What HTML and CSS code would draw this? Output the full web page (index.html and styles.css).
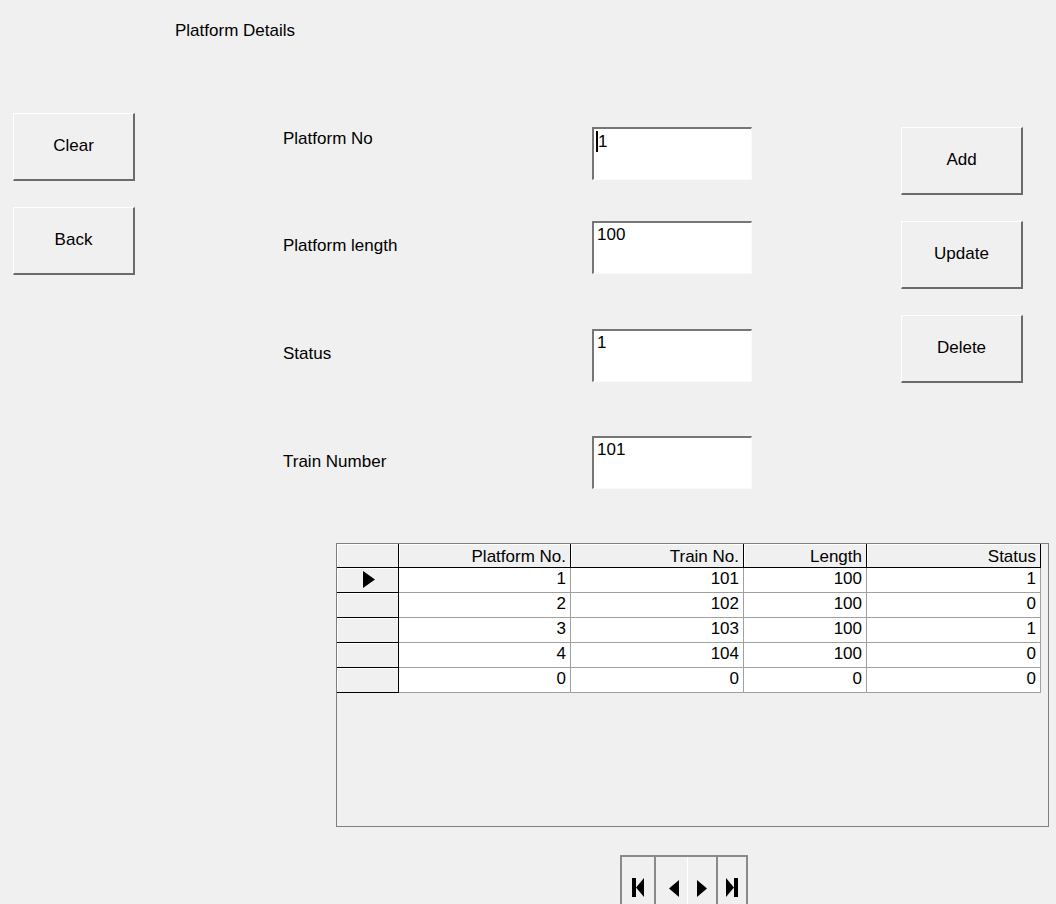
FILE: index.html
```html
<!DOCTYPE html>
<html>
<head>
<meta charset="utf-8">
<title>Platform Details</title>
<link rel="stylesheet" href="styles.css">
</head>
<body>
<div class="window">
  <div class="title">Platform Details</div>

  <div class="main">
    <div class="col-left">
      <div class="btn">Clear</div>
      <div class="btn">Back</div>
    </div>

    <div class="col-labels">
      <div class="label l1">Platform No</div>
      <div class="label l2">Platform length</div>
      <div class="label l3">Status</div>
      <div class="label l4">Train Number</div>
    </div>

    <div class="col-inputs">
      <div class="field f1"><span class="caret"></span>1</div>
      <div class="field f2">100</div>
      <div class="field f3">1</div>
      <div class="field f4">101</div>
    </div>

    <div class="col-right">
      <div class="btn">Add</div>
      <div class="btn">Update</div>
      <div class="btn">Delete</div>
    </div>
  </div>

  <div class="datagrid">
    <div class="grid">
      <div class="rh hd"></div>
      <div class="ch">Platform No.</div>
      <div class="ch">Train No.</div>
      <div class="ch">Length</div>
      <div class="ch">Status</div>

      <div class="rh"><svg class="marker" width="12" height="17" viewBox="0 0 12 17"><polygon points="0,0 12,8.5 0,17" fill="#000"/></svg></div>
      <div class="cell">1</div><div class="cell">101</div><div class="cell">100</div><div class="cell">1</div>

      <div class="rh"></div>
      <div class="cell">2</div><div class="cell">102</div><div class="cell">100</div><div class="cell">0</div>

      <div class="rh"></div>
      <div class="cell">3</div><div class="cell">103</div><div class="cell">100</div><div class="cell">1</div>

      <div class="rh"></div>
      <div class="cell">4</div><div class="cell">104</div><div class="cell">100</div><div class="cell">0</div>

      <div class="rh"></div>
      <div class="cell">0</div><div class="cell">0</div><div class="cell">0</div><div class="cell">0</div>
    </div>
  </div>

  <div class="nav">
    <div class="nb nb1">
      <svg width="12" height="19" viewBox="0 0 12 19"><rect x="0" y="0" width="4" height="19" fill="#000"/><polygon points="12,0 4,9.5 12,19" fill="#000"/></svg>
    </div>
    <div class="nb nb2">
      <svg width="10" height="17" viewBox="0 0 10 17"><polygon points="10,0 0,8.5 10,17" fill="#000"/></svg>
    </div>
    <div class="nb nb3">
      <svg width="10" height="17" viewBox="0 0 10 17"><polygon points="0,0 10,8.5 0,17" fill="#000"/></svg>
    </div>
    <div class="nb nb4">
      <svg width="12" height="19" viewBox="0 0 12 19"><polygon points="0,0 8,9.5 0,19" fill="#000"/><rect x="8" y="0" width="4" height="19" fill="#000"/></svg>
    </div>
  </div>
</div>
</body>
</html>
```

FILE: styles.css
```css
html, body {
  margin: 0;
  padding: 0;
  height: 904px;
  overflow: hidden;
  background: #f0f0f0;
}

.window {
  font-family: "Liberation Sans", Arial, sans-serif;
  font-size: 17px;
  line-height: 20px;
  color: #000;
}

.title {
  padding-top: 21px;
  padding-left: 175px;
  height: 20px;
}

.main {
  display: flex;
  align-items: flex-start;
  margin-top: 72px;
  padding-left: 13px;
}

.col-left {
  width: 122px;
  display: flex;
  flex-direction: column;
  gap: 26px;
}

.btn {
  box-sizing: border-box;
  height: 68px;
  width: 122px;
  background: #f0f0f0;
  border-top: 1px solid #ffffff;
  border-left: 1px solid #ffffff;
  border-right: 2px solid #6b6b6b;
  border-bottom: 2px solid #6b6b6b;
  padding-top: 22px;
  text-align: center;
}

.col-labels {
  margin-left: 148px;
  width: 309px;
  display: flex;
  flex-direction: column;
}

.label { height: 20px; }
.l1 { margin-top: 16px; }
.l2 { margin-top: 87px; }
.l3 { margin-top: 88px; }
.l4 { margin-top: 88px; }

.col-inputs {
  width: 160px;
  display: flex;
  flex-direction: column;
}

.field {
  box-sizing: border-box;
  height: 53px;
  width: 160px;
  background: #ffffff;
  border-top: 2px solid #767676;
  border-left: 2px solid #767676;
  border-right: 1px solid #fafafa;
  border-bottom: 1px solid #fafafa;
  padding: 2px 3px 0 3px;
}
.f1 { margin-top: 14px; }
.f2 { margin-top: 41px; }
.f3 { margin-top: 55px; }
.f4 { margin-top: 54px; }

.caret {
  display: inline-block;
  width: 2px;
  height: 21px;
  background: #000;
  vertical-align: -5px;
  margin-left: -1px;
}

.col-right {
  margin-left: 149px;
  margin-top: 14px;
  width: 122px;
  display: flex;
  flex-direction: column;
  gap: 26px;
}

.datagrid {
  box-sizing: border-box;
  margin-top: 54px;
  margin-left: 336px;
  width: 713px;
  height: 284px;
  border: 1px solid #7f7f7f;
  background: #f0f0f0;
}

.grid {
  display: grid;
  grid-template-columns: 62px 172px 173px 123px 174px;
  grid-template-rows: 24px;
  grid-auto-rows: 25px;
}

.rh, .ch {
  background: #f0f0f0;
  border-right: 1px solid #000;
  border-bottom: 1px solid #000;
  box-shadow: inset 1px 1px 0 #ffffff;
}

.rh {
  display: flex;
  align-items: flex-start;
}

.marker {
  margin-left: 26px;
  margin-top: 3px;
}

.ch {
  text-align: right;
  padding-right: 4px;
  padding-top: 3px;
  line-height: 20px;
}

.cell {
  background: #ffffff;
  border-right: 1px solid #a0a0a0;
  border-bottom: 1px solid #a0a0a0;
  text-align: right;
  padding-right: 4px;
  line-height: 22px;
}

.nav {
  box-sizing: border-box;
  display: flex;
  margin-top: 28px;
  margin-left: 620px;
  width: 128px;
  height: 49px;
  border-top: 2px solid #8a8a8a;
  border-left: 2px solid #8a8a8a;
  border-right: 2px solid #8a8a8a;
  background: #f0f0f0;
}

.nb {
  display: flex;
  align-items: flex-start;
  justify-content: center;
  padding-top: 21px;
}
.nb1 { width: 31px; border-right: 2px solid #8a8a8a; padding-left: 1px; }
.nb2 { box-sizing: border-box; width: 33px; border-right: 1px solid #ffffff; padding-top: 23px; padding-left: 4px; }
.nb3 { width: 28px; border-right: 2px solid #8a8a8a; padding-top: 23px; }
.nb4 { width: 28px; }
```
